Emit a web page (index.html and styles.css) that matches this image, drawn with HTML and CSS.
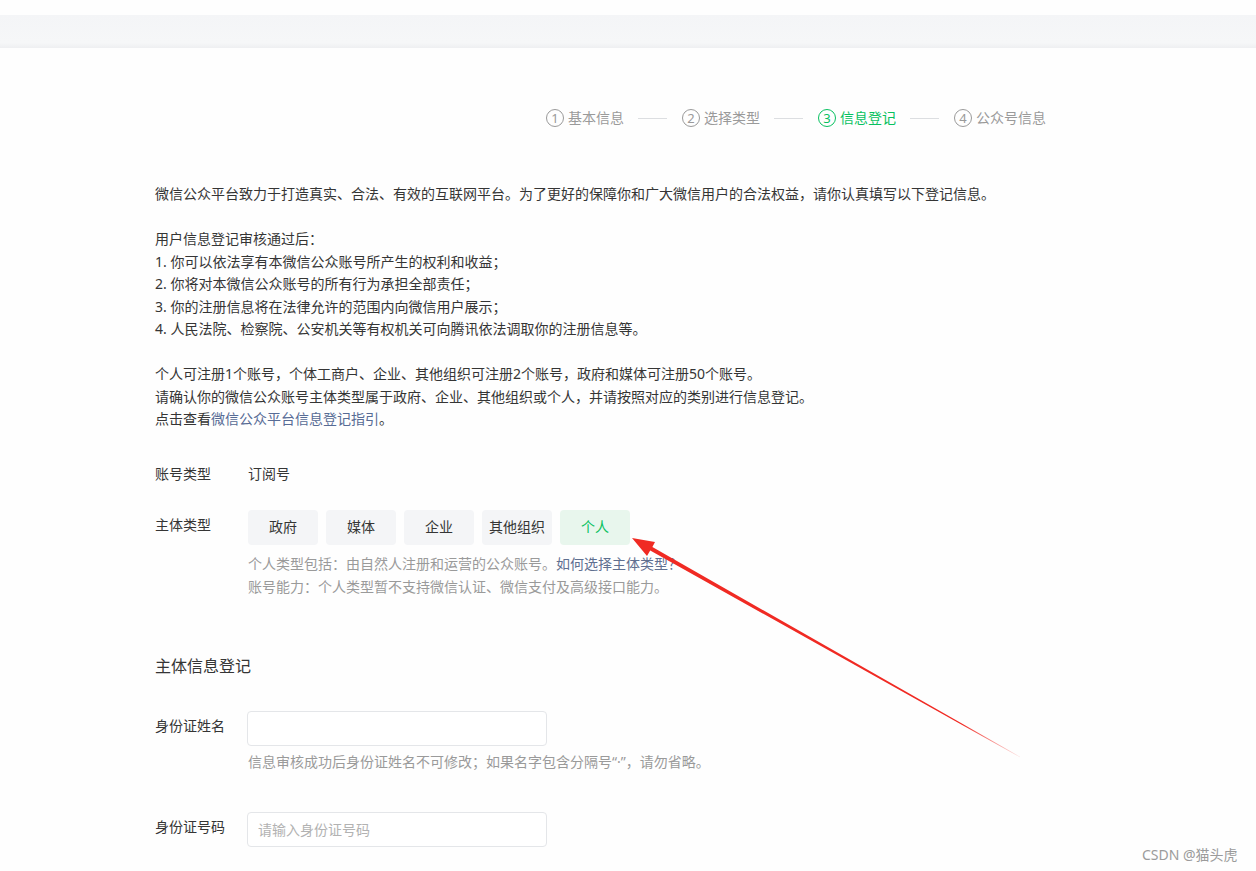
FILE: index.html
```html
<!DOCTYPE html>
<html lang="zh-CN">
<head>
<meta charset="utf-8">
<title>信息登记</title>
<link rel="stylesheet" href="styles.css">
</head>
<body>
<div class="topbar"></div>
<div class="main">
  <div class="steps">
    <div class="step"><span class="num">1</span><span class="step-text">基本信息</span></div>
    <div class="step-line"></div>
    <div class="step"><span class="num">2</span><span class="step-text">选择类型</span></div>
    <div class="step-line"></div>
    <div class="step active"><span class="num">3</span><span class="step-text">信息登记</span></div>
    <div class="step-line"></div>
    <div class="step"><span class="num">4</span><span class="step-text">公众号信息</span></div>
  </div>

  <div class="intro">
    <p>微信公众平台致力于打造真实、合法、有效的互联网平台。为了更好的保障你和广大微信用户的合法权益，请你认真填写以下登记信息。</p>
    <p>用户信息登记审核通过后：<br>1. 你可以依法享有本微信公众账号所产生的权利和收益；<br>2. 你将对本微信公众账号的所有行为承担全部责任；<br>3. 你的注册信息将在法律允许的范围内向微信用户展示；<br>4. 人民法院、检察院、公安机关等有权机关可向腾讯依法调取你的注册信息等。</p>
    <p>个人可注册1个账号，个体工商户、企业、其他组织可注册2个账号，政府和媒体可注册50个账号。<br>请确认你的微信公众账号主体类型属于政府、企业、其他组织或个人，并请按照对应的类别进行信息登记。<br>点击查看<a class="link" href="#">微信公众平台信息登记指引</a>。</p>
  </div>

  <div class="row row-account">
    <div class="label">账号类型</div>
    <div class="value">订阅号</div>
  </div>

  <div class="row row-type">
    <div class="label label-pad">主体类型</div>
    <div class="field">
      <div class="type-btns">
        <span class="type-btn">政府</span>
        <span class="type-btn">媒体</span>
        <span class="type-btn">企业</span>
        <span class="type-btn">其他组织</span>
        <span class="type-btn selected">个人</span>
      </div>
      <div class="desc">个人类型包括：由自然人注册和运营的公众账号。<a class="link" href="#">如何选择主体类型？</a><br>账号能力：个人类型暂不支持微信认证、微信支付及高级接口能力。</div>
    </div>
  </div>

  <h2 class="section-title">主体信息登记</h2>

  <div class="row row-name">
    <div class="label label-pad">身份证姓名</div>
    <div class="field">
      <input class="input" type="text">
      <div class="hint">信息审核成功后身份证姓名不可修改；如果名字包含分隔号“·”，请勿省略。</div>
    </div>
  </div>

  <div class="row row-id">
    <div class="label label-pad">身份证号码</div>
    <div class="field">
      <input class="input" type="text" placeholder="请输入身份证号码">
    </div>
  </div>
</div>

<svg class="arrow" width="1256" height="871" viewBox="0 0 1256 871">
  <defs>
    <linearGradient id="fade" gradientUnits="userSpaceOnUse" x1="632" y1="538" x2="1020" y2="757">
      <stop offset="0" stop-color="#f02a23"/>
      <stop offset="0.85" stop-color="#f02a23"/>
      <stop offset="1" stop-color="#f02a23" stop-opacity="0.1"/>
    </linearGradient>
  </defs>
  <polygon fill="url(#fade)" points="632,538 655,542 652.4,547 1020.2,756.8 1019.8,757.2 650.2,550.6 647,556"/>
</svg>

<div class="watermark">CSDN @猫头虎</div>
</body>
</html>
```

FILE: styles.css
```css
html, body {
  margin: 0;
  padding: 0;
  background: #fefefe;
}
body {
  font-family: "Noto Sans", "Noto Sans CJK SC", sans-serif;
  font-size: 14px;
  color: #353535;
  line-height: 22px;
  height: 871px;
  overflow: hidden;
  position: relative;
}
.topbar {
  margin-top: 15px;
  height: 33px;
  background: linear-gradient(#f4f5f7, #f6f7f8 85%, #eeeff1);
}
.main {
  margin-left: 155px;
  width: 891px;
}
.steps {
  margin-top: 59px;
  display: flex;
  justify-content: flex-end;
  align-items: center;
  height: 22px;
}
.step {
  display: flex;
  align-items: center;
  color: #9a9a9a;
}
.step.active {
  color: #07c160;
}
.num {
  width: 16px;
  height: 16px;
  border: 1px solid currentColor;
  border-radius: 50%;
  display: inline-flex;
  align-items: center;
  justify-content: center;
  font-size: 13px;
  line-height: 16px;
  margin-right: 4px;
}
.step-text {
  font-size: 14px;
}
.step-line {
  width: 29px;
  height: 1px;
  background: #dcdee1;
  margin: 0 15px 0 14px;
}
.intro {
  margin-top: 54px;
  line-height: 22.5px;
}
.intro p {
  margin: 0 0 22.5px 0;
}
.intro p:last-child {
  margin-bottom: 0;
}
.link {
  color: #576b95;
  text-decoration: none;
}
.row {
  display: flex;
  align-items: flex-start;
}
.label {
  width: 93px;
  flex: none;
}
.label-pad {
  padding-top: 4px;
}
.row-account {
  margin-top: 32px;
}
.row-type {
  margin-top: 25px;
}
.type-btns {
  display: flex;
  gap: 8px;
}
.type-btn {
  width: 70px;
  height: 35px;
  border-radius: 4px;
  background: #f4f5f7;
  display: flex;
  align-items: center;
  justify-content: center;
  color: #353535;
}
.type-btn.selected {
  background: #e8f6ed;
  color: #07c160;
}
.desc {
  margin-top: 7px;
  color: #9a9a9a;
  line-height: 23px;
}
.desc .link {
  color: #5f6f90;
}
.section-title {
  margin: 56px 0 0 0;
  font-size: 16px;
  font-weight: normal;
  line-height: 24px;
  color: #353535;
}
.row-name {
  margin-top: 33px;
}
.row-id {
  margin-top: 39px;
}
.input {
  box-sizing: border-box;
  width: 300px;
  height: 35px;
  border: 1px solid #e4e6e9;
  border-radius: 4px;
  padding: 0 10px;
  font-family: inherit;
  font-size: 14px;
  color: #353535;
  background: #fff;
  outline: none;
  display: block;
  margin-left: -1px;
}
.input::placeholder {
  color: #b2b2b2;
}
.hint {
  margin-top: 5px;
  color: #9a9a9a;
}
.arrow {
  position: absolute;
  left: 0;
  top: 0;
  pointer-events: none;
}
.watermark {
  position: absolute;
  left: 1142px;
  top: 844px;
  color: #9b9b9b;
  font-size: 14px;
  line-height: 22px;
}
```
